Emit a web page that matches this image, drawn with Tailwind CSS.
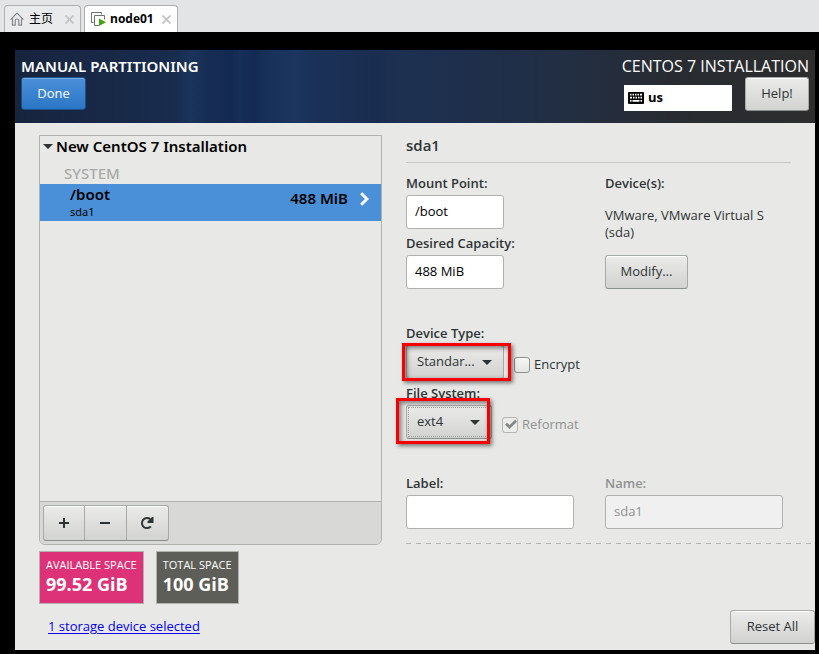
<!DOCTYPE html>
<html lang="en">
<head>
<meta charset="utf-8">
<title>Manual Partitioning</title>
<meta name="viewport" content="width=device-width, initial-scale=1">
<script src="https://cdn.jsdelivr.net/npm/@tailwindcss/browser@4"></script>
</head>
<body class="min-h-screen flex flex-col bg-black font-['Open_Sans',sans-serif] text-[13px] text-[#2e3436]">
<nav class="h-8 shrink-0 flex items-end bg-[#e3e4e6] pl-1 gap-[3px] font-['Open_Sans','Noto_Sans_CJK_SC',sans-serif] text-xs text-black" aria-label="Tabs">
  <div class="h-[27px] w-[77px] flex items-center border border-b-0 border-[#adafb1] rounded-t bg-[#e9eaec] pl-[5px] pr-1.5">
    <svg class="w-[14px] h-[14px] shrink-0" viewBox="0 0 14 14" fill="none" stroke="#85898c" stroke-width="1.2"><path d="M.6 7.6 7 1.2l6.4 6.4M2.5 6.2v7h2.7V8.700c0-2.3 3.6-2.3 3.6 0v4.500h2.700v-7"/></svg>
    <a href="#" class="ml-[5px] whitespace-nowrap">主页</a>
    <button class="ml-auto" aria-label="Close 主页"><svg class="w-[9px] h-[9px]" viewBox="0 0 9 9" stroke="#c3c4c5" stroke-width="1.8"><path d="M.5.5l8 8M8.500.5l-8 8"/></svg></button>
  </div>
  <div class="h-[27px] w-[94px] flex items-center border border-b-0 border-[#adafb1] rounded-t bg-white pl-1.5 pr-1.5">
    <svg class="w-[15px] h-[14px] shrink-0" viewBox="0 0 15 14" fill="none" stroke="#6f7375"><path d="M2.500 10.500h-2v-10h10v2M8 13.500H3.500v-10h10v4"/><path d="M8 6.500v7.500l7-3.700z" fill="#46a010" stroke="none"/></svg>
    <a href="#" class="ml-1 font-bold">node01</a>
    <button class="ml-auto" aria-label="Close node01"><svg class="w-[9px] h-[9px]" viewBox="0 0 9 9" stroke="#c3c4c5" stroke-width="1.8"><path d="M.5.5l8 8M8.500.5l-8 8"/></svg></button>
  </div>
</nav>

<div class="flex-1 flex flex-col mt-[18px] ml-[15px] mr-1 mb-1 bg-[#e8e8e6]">
  <header class="h-[73px] shrink-0 flex justify-between pl-1.5 pr-1.5 pt-1.5 text-white bg-[linear-gradient(90deg,transparent_20%,rgba(40,90,150,0.16)_22%,transparent_24%,rgba(5,20,70,0.2)_27%,transparent_28%,rgba(5,20,70,0.2)_30%,transparent_31%,rgba(40,90,150,0.12)_35%,transparent_38%,rgba(5,20,60,0.12)_45%,transparent_48%),linear-gradient(90deg,#17243e_0%,#182b4c_18%,#162f58_29%,#1b3156_40%,#1e2f4c_56%,#222e42_70%,#282c32_82%,#2d2d2d_100%)]">
    <div>
      <h1 class="text-[15px] leading-[21px] font-semibold font-['Noto_Sans',sans-serif]">MANUAL PARTITIONING</h1>
      <button class="h-[33px] w-[65px] rounded-[3px] border border-[#1c5187] bg-linear-to-b from-[#4a90d9] to-[#2a76c6] shadow-[inset_0_1px_0_#74ade6]">Done</button>
    </div>
    <div class="flex flex-col items-end">
      <p class="text-[16px] leading-[21px]">CENTOS 7 INSTALLATION</p>
      <div class="flex items-end gap-[13px]">
        <div class="h-[26px] w-[108px] flex items-center bg-white text-black font-bold pl-1 gap-1">
          <svg class="w-4 h-3" viewBox="0 0 16 12"><rect width="16" height="12" rx="1"/><path fill="none" stroke="#fff" stroke-width="1.700" d="M2 2.700h1.500m1 0H6m1 0h1.500m1 0H11m1 0h2M2 5.700h2m1 0h1.500m1 0H9m1 0h1.500m1 0H14M2 8.900h1.500m1 0h7m1 0H14"/></svg>
          <span>us</span>
        </div>
        <button class="h-[34px] w-16 rounded-[3px] border border-[#a7aba7] border-b-[#8c908c] bg-linear-to-b from-[#ebebea] to-[#d2d2d0] text-[#2e3436] shadow-[inset_0_1px_0_#fff]">Help!</button>
      </div>
    </div>
  </header>

  <main class="flex-1 grid grid-cols-[343fr_409fr] gap-6 pl-6 pt-3">
    <section class="flex flex-col">
      <div class="flex-1 flex flex-col border border-[#b0b2ae] rounded-b-md">
        <div class="flex-1 text-black font-['Noto_Sans',sans-serif]">
          <h2 class="flex items-center text-[15px] leading-5 font-semibold pl-[3px] gap-[3px]">
            <svg class="w-2.5 h-[5px]" viewBox="0 0 10 5" fill="#2e3436"><path d="M0 0h10L5 5z"/></svg>New CentOS 7 Installation</h2>
          <h3 class="text-[15px] leading-[22px] font-medium text-[#a9aaa8] pl-6 pt-1.5">SYSTEM</h3>
          <div class="h-[37px] flex bg-[#4a90d9] pl-[30px] pr-3">
            <div>
              <p class="text-[15px] leading-5 font-semibold">/boot</p>
              <p class="text-[11px] leading-4">sda1</p>
            </div>
            <span class="ml-auto text-[15px] leading-7 font-semibold">488 MiB</span>
            <svg class="ml-3 mt-2 w-[9px] h-[14px]" viewBox="0 0 9 14" fill="none" stroke="#fff" stroke-width="3"><path d="M1.200 1.200 7 7l-5.800 5.800"/></svg>
          </div>
        </div>
        <div class="h-[43px] border-t border-[#b0b2ae] bg-[#d8d8d6] rounded-b-md p-[3px]">
          <div class="h-9 w-[126px] grid grid-cols-3 divide-x divide-[#a7aba7] rounded-[3px] border border-[#a7aba7] border-b-[#8c908c] bg-linear-to-b from-[#ebebea] to-[#d2d2d0] shadow-[inset_0_1px_0_#fff]">
            <button class="flex items-center justify-center" aria-label="Add"><svg class="w-2.5 h-2.5" viewBox="0 0 10 10" fill="#2e3436"><path d="M4 0h2v4h4v2H6v4H4V6H0V4h4z"/></svg></button>
            <button class="flex items-center justify-center" aria-label="Remove"><svg class="w-2.5 h-2.5" viewBox="0 0 10 10" fill="#2e3436"><path d="M0 4h10v2H0z"/></svg></button>
            <button class="flex items-center justify-center" aria-label="Reload"><svg class="w-[14px] h-[14px]" viewBox="0 0 14 14"><path d="M10.800 10.300A5 5 0 1 1 10.200 3.300" fill="none" stroke="#2e3436" stroke-width="2"/><path d="M13.500 1v6h-6v-1.400L12.200 1z" fill="#2e3436"/></svg></button>
          </div>
        </div>
      </div>
      <div class="flex gap-3 mt-1.5 text-white">
        <div class="h-[53px] border border-[#b0b2ae] bg-[#dd3277] px-1.5 pt-[5px]">
          <p class="text-[11px] leading-4">AVAILABLE SPACE</p>
          <p class="text-[18px] leading-[22px] font-bold">99.52 GiB</p>
        </div>
        <div class="h-[53px] border border-[#b0b2ae] bg-[#5d5e57] px-1.5 pt-[5px]">
          <p class="text-[11px] leading-4">TOTAL SPACE</p>
          <p class="text-[18px] leading-[22px] font-bold">100 GiB</p>
        </div>
      </div>
      <a href="#" class="self-start ml-[9px] mt-3 mb-[14px] leading-5 text-[#0000ee] underline underline-offset-2">1 storage device selected</a>
    </section>

    <section class="flex flex-col">
      <h2 class="h-7 mr-6 border-b border-[#c8cac6] text-[15px] leading-5 font-semibold">sda1</h2>
      <div class="grid grid-cols-[199fr_210fr] mt-2">
        <div>
          <label for="mount" class="block leading-6 font-semibold">Mount Point:</label>
          <input id="mount" value="/boot" class="block w-[98px] h-[34px] rounded-[3px] border border-[#b0b2ae] bg-white px-2 pb-0.5 text-black">
          <label for="capacity" class="block mt-0.5 leading-6 font-semibold">Desired Capacity:</label>
          <input id="capacity" value="488 MiB" class="block w-[98px] h-[34px] rounded-[3px] border border-[#b0b2ae] bg-white px-2 pb-0.5 text-black">
        </div>
        <div>
          <h3 class="leading-6 font-semibold">Device(s):</h3>
          <p class="mt-3 leading-[17px]">VMware, VMware Virtual S<br>(sda)</p>
          <button class="mt-[14px] h-[34px] w-[83px] rounded-[3px] border border-[#a7aba7] border-b-[#8c908c] bg-linear-to-b from-[#ebebea] to-[#d2d2d0] shadow-[inset_0_1px_0_#fff]">Modify...</button>
        </div>
      </div>

      <div class="mt-8">
        <label for="type" class="block leading-6 font-semibold">Device Type:</label>
        <div class="flex items-center gap-2.5">
          <div class="relative">
            <select id="type" class="block appearance-none w-[98px] h-[34px] rounded-[3px] border border-[#a7aba7] border-b-[#8c908c] bg-linear-to-b from-[#ebebea] to-[#d2d2d0] pl-2.5"><option>Standar...</option></select>
            <svg class="absolute right-3 top-[15px] w-2.5 h-[5px] pointer-events-none" viewBox="0 0 10 5" fill="#2e3436"><path d="M0 0h10L5 5z"/></svg>
            <div class="absolute -left-1 -top-0.5 w-[109px] h-[38px] border-3 border-[#f90000] shadow-[2px_2px_4px_rgba(0,0,0,0.5),inset_2px_2px_5px_rgba(0,0,0,0.5)] pointer-events-none"></div>
          </div>
          <div class="flex items-center gap-1 pt-1.5">
            <input type="checkbox" id="encrypt" class="appearance-none w-4 h-4 rounded-[3px] border border-[#8f928e] bg-linear-to-b from-[#f6f6f5] to-[#e4e4e2]">
            <label for="encrypt">Encrypt</label>
          </div>
        </div>
        <label for="fs" class="block mt-0.5 leading-6 font-semibold">File System:</label>
        <div class="flex items-center gap-2.5">
          <div class="relative">
            <select id="fs" class="block appearance-none w-[86px] h-[34px] rounded-[3px] border border-[#a7aba7] border-b-[#8c908c] bg-linear-to-b from-[#ebebea] to-[#d2d2d0] pl-2.5 outline outline-dotted -outline-offset-3 outline-[#9a9c98]"><option>ext4</option></select>
            <svg class="absolute right-3 top-[15px] w-2.5 h-[5px] pointer-events-none" viewBox="0 0 10 5" fill="#2e3436"><path d="M0 0h10L5 5z"/></svg>
            <div class="absolute -left-2.5 -top-[7px] w-[94px] h-[46px] border-3 border-[#f90000] shadow-[2px_2px_4px_rgba(0,0,0,0.5),inset_2px_2px_5px_rgba(0,0,0,0.5)] pointer-events-none"></div>
          </div>
          <div class="flex items-center gap-1 pt-1.5 text-[#8f9291]">
            <span class="relative flex">
              <input type="checkbox" id="reformat" checked disabled class="appearance-none w-4 h-4 rounded-[3px] border border-[#b4b6b2] bg-[#ececeb]">
              <svg class="absolute left-[3px] top-[3px] w-3 h-[9px] pointer-events-none" viewBox="0 0 12 9" fill="none" stroke="#85888a" stroke-width="2.800"><path d="M1 3.700 4.500 7 11 .8"/></svg>
            </span>
            <label for="reformat">Reformat</label>
          </div>
        </div>
      </div>

      <div class="grid grid-cols-[199fr_210fr] mt-8">
        <div>
          <label for="label" class="block leading-6 font-semibold">Label:</label>
          <input id="label" class="block w-[168px] h-[34px] rounded-[3px] border border-[#b0b2ae] bg-white px-2 pb-0.5 text-black">
        </div>
        <div class="pr-8">
          <label for="name" class="block leading-6 font-semibold text-[#8f9291]">Name:</label>
          <input id="name" value="sda1" disabled class="block w-full h-[34px] rounded-[3px] border border-[#b0b2ae] bg-[#f0f0f0] px-2 pb-0.5 text-[#8f9291]">
        </div>
      </div>
      <div class="mt-[14px] mr-1 h-px bg-[repeating-linear-gradient(90deg,#b3b5b1_0_5px,transparent_5px_10px)]"></div>
      <button class="mt-auto mb-1.5 self-end h-[34px] w-[85px] rounded-[3px] border border-[#a7aba7] border-b-[#8c908c] bg-linear-to-b from-[#ebebea] to-[#d2d2d0] shadow-[inset_0_1px_0_#fff]">Reset All</button>
    </section>
  </main>
</div>
</body>
</html>
